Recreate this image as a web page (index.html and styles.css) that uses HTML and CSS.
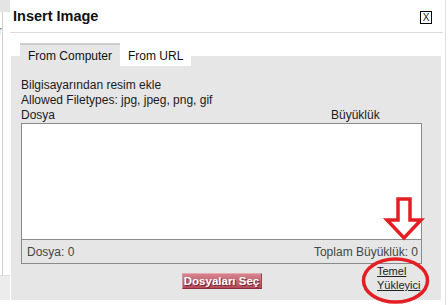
FILE: index.html
```html
<!DOCTYPE html>
<html lang="tr">

<head>
    <meta charset="UTF-8">
    <title>Insert Image</title>
    <link rel="stylesheet" href="styles.css">
</head>

<body>
    <div class="backdrop">
        <div class="backdrop-top"></div>
        <div class="backdrop-col">r</div>
        <div class="backdrop-foot"></div>
    </div>

    <div class="dialog">
        <div class="dialog-title">
            <span class="title-text">Insert Image</span>
            <span class="close-btn">X</span>
        </div>

        <div class="tabs">
            <span class="tab active">From Computer</span>
            <span class="tab">From URL</span>
        </div>

        <div class="panel">
            <p class="info">Bilgisayarından resim ekle<br>Allowed Filetypes: jpg, jpeg, png, gif</p>
            <div class="list-head">
                <span>Dosya</span>
                <span>Büyüklük</span>
            </div>
            <div class="file-box">
                <div class="file-list"></div>
                <div class="file-foot">
                    <span>Dosya: 0</span>
                    <span>Toplam Büyüklük: 0</span>
                </div>
            </div>
            <div class="actions">
                <span></span>
                <button class="select-btn">Dosyaları Seç</button>
                <a class="basic-link" href="#">Temel Yükleyici</a>
            </div>
        </div>
    </div>

    <div class="edge"></div>

    <!-- red marks drawn over the screenshot -->
    <svg class="annotation" width="448" height="305" viewBox="0 0 448 305">
        <polygon points="398,199 410,199 410,220 421,220 404,238 387,220 398,220" fill="none" stroke="#e31e24" stroke-width="3.5" stroke-linejoin="miter"/>
        <ellipse cx="395.5" cy="280.5" rx="32" ry="21.5" fill="none" stroke="#e31e24" stroke-width="3.5"/>
    </svg>
</body>

</html>
```

FILE: styles.css
```css
body {
    margin: 0;
    height: 305px;
    display: flex;
    position: relative;
    overflow: hidden;
    background-color: white;
    font-family: "Liberation Sans", Arial, sans-serif;
    font-size: 12px;
    color: #1a1a1a;
}

.backdrop {
    width: 10px;
    display: flex;
    flex-direction: column;
}

.backdrop-top {
    height: 12px;
    background-color: #e4e4e4;
}

.backdrop-col {
    width: 3px;
    height: 263px;
    border-right: 1px solid #cfcfcf;
    overflow: hidden;
    line-height: 14px;
    padding-top: 12px;
    box-sizing: border-box;
    color: #777;
    text-indent: -2px;
}

.backdrop-foot {
    height: 24px;
    border-top: 1px solid #dcdcdc;
    background-color: #ececec;
}

.dialog {
    width: 433px;
}

.edge {
    width: 1px;
    margin-left: 2px;
    background-color: #dedede;
}

.dialog-title {
    height: 32px;
    border-bottom: 1px solid #dcdcdc;
    display: flex;
    align-items: center;
    justify-content: space-between;
    padding: 0 11px 0 3px;
}

.title-text {
    font-size: 14.5px;
    font-weight: bold;
    color: #111;
}

.close-btn {
    width: 10px;
    height: 11px;
    border: 1px solid #000;
    font-size: 10px;
    line-height: 11px;
    text-align: center;
    color: #222;
    margin-top: 2px;
}

.tabs {
    display: flex;
    align-items: flex-end;
    margin-top: 10px;
    padding-left: 10px;
    position: relative;
    z-index: 1;
}

.tab {
    line-height: 14px;
    padding: 1px 8px 3px;
    background-color: white;
    color: #111;
}

.tab.active {
    background-color: #e6e6e6;
    border-top: 2px solid #cdcdcd;
    padding-top: 4px;
}

.panel {
    margin: -10px 2px 0 1px;
    height: 244px;
    box-sizing: border-box;
    padding: 22px 19px 0 10px;
    background-color: #e6e6e6;
}

.info {
    margin: 0;
    line-height: 15px;
}

.list-head {
    display: grid;
    grid-template-columns: 1fr 91px;
    line-height: 15px;
}

.file-box {
    border: 1px solid #8a8a8a;
}

.file-list {
    height: 115px;
    background-color: white;
    border-bottom: 1px solid #8a8a8a;
}

.file-foot {
    height: 23px;
    display: flex;
    align-items: center;
    justify-content: space-between;
    padding: 0 3px 0 5px;
    color: #444;
}

.actions {
    display: grid;
    grid-template-columns: 1fr auto 1fr;
    align-items: start;
}

.select-btn {
    width: 80px;
    height: 16px;
    margin-top: 9px;
    padding: 0;
    border: 1px solid;
    border-color: #e6a9b2 #a33f4e #8c2c3b #d8909b;
    background: linear-gradient(#d7838f, #b14a5a);
    color: white;
    font-family: "Liberation Sans", Arial, sans-serif;
    font-size: 11.5px;
    font-weight: bold;
    line-height: 14px;
    white-space: nowrap;
    text-shadow: 1px 1px 0 #7d2434;
}

.basic-link {
    justify-self: end;
    width: 45px;
    font-size: 11px;
    line-height: 14px;
    color: #222;
}

.annotation {
    position: absolute;
    left: 0;
    top: 0;
    pointer-events: none;
}
```
